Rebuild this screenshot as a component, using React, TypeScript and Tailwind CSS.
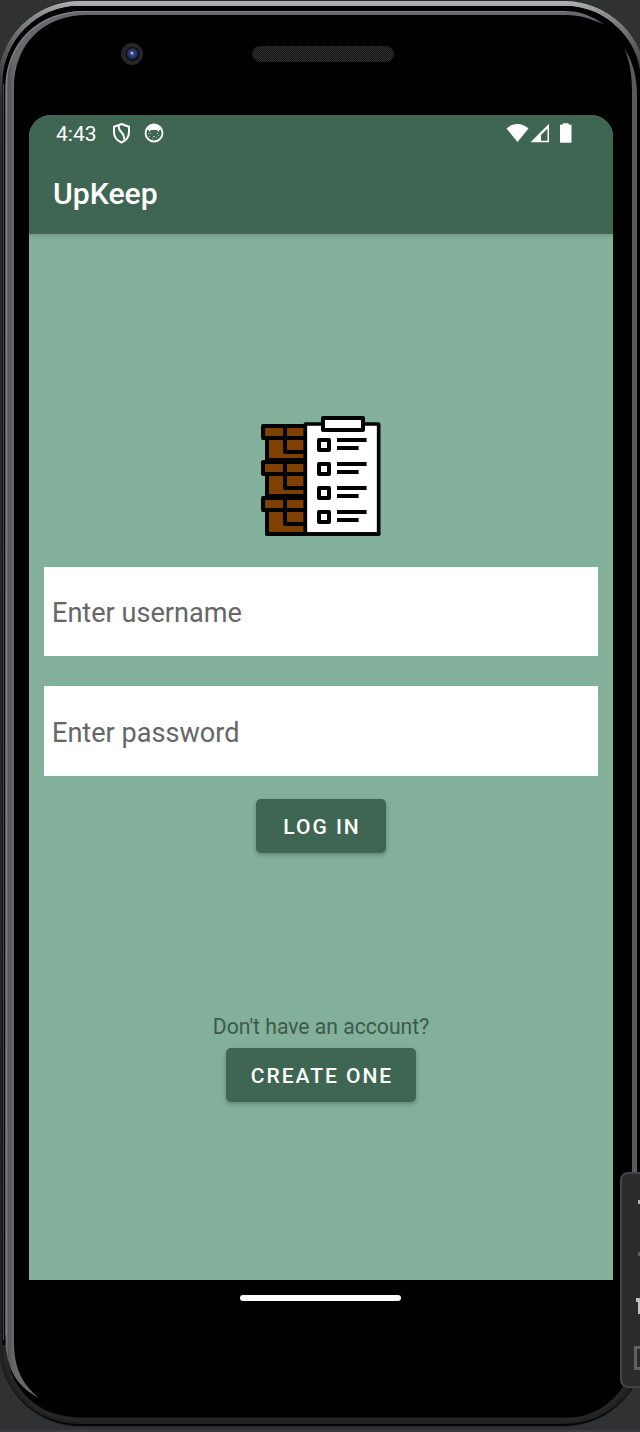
import type { ReactNode } from 'react';

function DeviceFrame() {
  return (
    <svg className="absolute inset-0" width="640" height="1432" viewBox="0 0 640 1432" fill="none">
      <defs>
        <linearGradient id="rim" x1="0" y1="0" x2="0" y2="1432" gradientUnits="userSpaceOnUse">
          <stop offset="0" stopColor="#b4b4b9" />
          <stop offset="0.01" stopColor="#8c8c91" />
          <stop offset="0.035" stopColor="#58585b" />
          <stop offset="0.07" stopColor="#2c2c2d" />
          <stop offset="1" stopColor="#202020" />
        </linearGradient>
        <linearGradient id="side" x1="5" y1="0" x2="14" y2="0" gradientUnits="userSpaceOnUse">
          <stop offset="0" stopColor="#85858a" />
          <stop offset="0.4" stopColor="#55565c" />
          <stop offset="1" stopColor="#68696f" />
        </linearGradient>
        <radialGradient id="lens" cx="0.48" cy="0.45" r="0.55">
          <stop offset="0" stopColor="#6f83b8" />
          <stop offset="0.35" stopColor="#34437c" />
          <stop offset="0.75" stopColor="#202a55" />
          <stop offset="1" stopColor="#0b0d18" />
        </radialGradient>
        <pattern id="mesh" width="2" height="2" patternUnits="userSpaceOnUse">
          <rect width="2" height="2" fill="#121212" />
          <rect width="1" height="1" fill="#333333" />
          <rect x="1" y="1" width="1" height="1" fill="#333333" />
        </pattern>
      </defs>
      <rect y="1430" width="640" height="2" fill="#3b3c42" />
      <rect x="-1.500" y="0.500" width="647" height="1426" rx="82" fill="#050505" stroke="#29292a" />
      <rect x="0.500" y="3.500" width="643" height="1418" rx="79" stroke="url(#rim)" strokeWidth="5" />
      <rect x="3.500" y="7" width="636" height="1411" rx="76" fill="#000" stroke="#000" strokeWidth="2" />
      <path d="M3.500 1340V84" stroke="#4a4a4d" />
      <path d="M4 1345C6 1388 34 1419 80 1419.500H568C605 1419 635 1388 638 1350" stroke="#262626" strokeWidth="4" />
      <path d="M605 25C590 15 580 11 565 11H84C38 11 5.500 42 5.500 88V1340C6 1370 18 1387 39 1398C22 1384 14 1368 14 1342V88C14 45 42 15 88 15H566C580 15 592 19 605 25Z" fill="url(#side)" />
      <path d="M565 11.500H84C40 11.500 6 43 6 88V1335" stroke="#85858b" strokeWidth="1" />
      <path d="M624 48C633 62 637 76 637 96V1180H632V92C632 75 630 62 624 48Z" fill="#59595e" />
      <circle cx="132" cy="54" r="11" fill="#262626" />
      <circle cx="132.500" cy="54" r="7" fill="#0c0c10" />
      <circle cx="132.500" cy="54" r="6" fill="url(#lens)" />
      <circle cx="131.800" cy="53" r="1.300" fill="#a6b6dc" />
      <rect x="252.500" y="46.500" width="141" height="15" rx="7.500" fill="url(#mesh)" stroke="#222222" />
    </svg>
  );
}

function Logo() {
  const items = [99, 171, 243, 315];
  const boxes = [57, 165, 273];
  return (
    <svg className="relative -left-px" width="140" height="140" viewBox="0 0 420 420" fill="none">
      {boxes.map((y) => (
        <g key={y} stroke="#000" strokeWidth="12" strokeLinejoin="round">
          <rect x="51" y={y + 42} width="116" height={y === 273 ? 72 : 66} fill="#804000" />
          <rect x="39" y={y + 6} width="128" height="36" fill="#804000" />
          <path d={`M105 ${y + 6}V${y + 84}H165`} />
        </g>
      ))}
      <rect x="166" y="57" width="220" height="330" rx="1" fill="#fff" stroke="#000" strokeWidth="11" strokeLinejoin="round" />
      <path d="M51 387H386" stroke="#000" strokeWidth="11" strokeLinecap="round" />
      <rect x="219" y="39" width="120" height="36" fill="#fff" stroke="#000" strokeWidth="12" strokeLinejoin="round" />
      {items.map((y) => (
        <g key={y} stroke="#000" strokeWidth="12" strokeLinejoin="round">
          <rect x="207" y={y + 6} width="30" height="30" />
          <path d={`M261 ${y + 6}H350M261 ${y + 30}H326`} />
        </g>
      ))}
    </svg>
  );
}

function StatusBar() {
  return (
    <div className="flex h-9 items-center pr-[39px] pl-[27px] text-white">
      <span className="pt-[3px] text-[21px]">4:43</span>
      <svg className="ml-[15px]" width="19" height="22" viewBox="0 0 19 22" fill="none" stroke="#fff" strokeWidth="2">
        <path d="M9.500 2L17 4.800V10C17 15 14 18.500 9.500 20.500C5 18.500 2 15 2 10V4.800Z" />
        <path d="M7 3.500C5 10 13.500 10 12 17.500" />
      </svg>
      <svg className="ml-[13px]" width="20" height="20" viewBox="0 0 20 20" fill="none">
        <circle cx="10" cy="10" r="8.500" stroke="#fff" strokeWidth="1.800" />
        <path d="M3 7C4.500 4 6 2 10 2S15.500 4 17 7L15.500 7L14.500 9L13 7H7L5.500 9L4.500 7Z" fill="#fff" />
        <path d="M6 10.500h1M13 10.500h1M5 13.500h1M9 13.500h2M14 12.500h1M8 15.500h1M4 10.500h1M12 14.500h1" stroke="#fff" strokeOpacity="0.6" />
      </svg>
      <div className="flex-1" />
      <svg width="68" height="22" viewBox="0 0 68 22" fill="#fff">
        <path d="M0.500 6.500C7 0.500 16 0.500 22.500 6.500L11.500 20Z" />
        <path d="M24.500 20.300L43 1.800V20.300ZM35 18.800H41.500V6.500L35 13Z" fillRule="evenodd" />
        <path d="M57 2.500V1.300H62.500V2.500H64.500Q65.500 2.500 65.500 3.500V19.800Q65.500 20.800 64.500 20.800H55Q54 20.800 54 19.800V3.500Q54 2.500 55 2.500Z" />
      </svg>
    </div>
  );
}

function Field({ label, type, className }: { label: string; type: string; className: string }) {
  return (
    <input
      type={type}
      placeholder={label}
      className={`block w-full bg-white px-[8px] text-[27.1px] text-black outline-none placeholder:text-[#666666] ${className}`}
    />
  );
}

function Button({ children, className }: { children: ReactNode; className: string }) {
  return (
    <button
      className={`flex h-[54px] items-center justify-center rounded-[5px] bg-[#3f6653] pt-[3px] pl-[2px] text-[21px] font-medium tracking-[1.98px] text-white shadow-[0_2px_4px_rgba(0,0,0,0.25)] ${className}`}
    >
      {children}
    </button>
  );
}

function EmulatorToolbar() {
  return (
    <div className="absolute top-[1172px] left-[620px] h-[216px] w-[40px] rounded-[8px] border-2 border-[#444444] bg-[#2b2b2b]">
      <svg width="18" height="212" viewBox="622 1174 18 212" fill="none">
        <path d="M638 1200h2v4h-2z" fill="#b0b0b0" />
        <path d="M638 1252h2v4h-2z" fill="#606060" />
        <path d="M636 1298h4v16h-2v-12h-2z" fill="#c0c0c0" />
        <path d="M640 1347.500H635.500V1368.500H640" stroke="#606060" strokeWidth="3" />
      </svg>
    </div>
  );
}

export default function App() {
  return (
    <div className="relative h-[1432px] w-[640px] overflow-hidden bg-[#303133] font-[Roboto,sans-serif]">
      <DeviceFrame />
      <div className="relative flex flex-col pt-[115px] pl-[29px]">
        <div className="flex h-[1165px] w-[584px] flex-col overflow-hidden rounded-t-[22px] bg-[#82b09a]">
          <header className="relative h-[119px] shrink-0 bg-[#3f6653] shadow-[0_1px_5px_rgba(0,0,0,0.2)]">
            <StatusBar />
            <h1 className="flex h-[83px] items-center pt-[3px] pl-[24px] text-[30.2px] font-medium text-white">UpKeep</h1>
          </header>
          <main className="flex flex-col items-center px-[15px] pt-[171px]">
            <Logo />
            <div className="mt-[22px] flex w-full flex-col gap-[30px]">
              <Field className="h-[89px] pt-[3px]" label="Enter username" type="text" />
              <Field className="h-[89.5px] pt-[4px]" label="Enter password" type="password" />
            </div>
            <Button className="mt-[23.5px] w-[130px]">LOG IN</Button>
            <p className="mt-[158px] text-[21.15px] leading-[31px] text-[#3d5a4b]">Don't have an account?</p>
            <Button className="mt-[6px] w-[190px]">CREATE ONE</Button>
          </main>
        </div>
        <div className="flex w-[583px] justify-center pt-[15px]">
          <div className="h-[6px] w-[161px] rounded-full bg-white" />
        </div>
      </div>
      <EmulatorToolbar />
    </div>
  );
}
